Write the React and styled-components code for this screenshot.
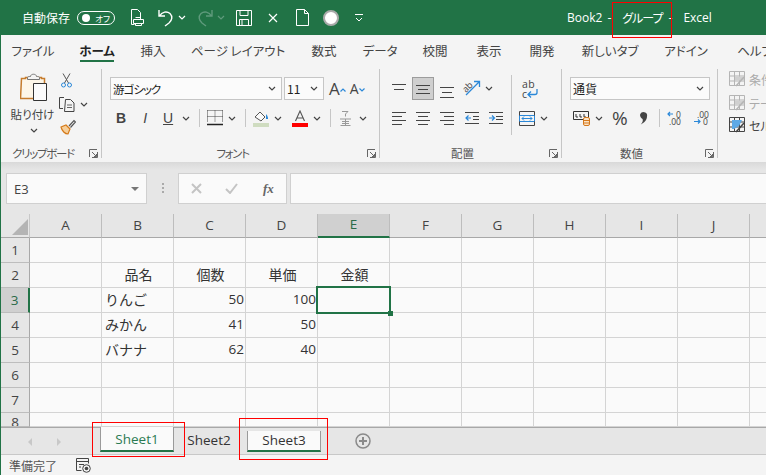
import React from 'react';
import styled, { createGlobalStyle } from 'styled-components';

const GREEN = '#217346';
const BLUE = '#2b88d8';
const JP = '"Noto Sans CJK JP", "Open Sans", sans-serif';

const Global = createGlobalStyle`
  html, body { margin: 0; padding: 0; background: #f3f3f3; }
  body { font-family: ${JP}; font-feature-settings: "palt"; overflow: hidden; }
  #root { width: 766px; height: 475px; overflow: hidden; }
`;

const Page = styled.div`
  position: relative; width: 766px; height: 475px; overflow: hidden;
  display: flex; flex-direction: column; background: #f4f4f4; color: #333;
`;
const Body = styled.div`
  flex: 1; min-height: 0; display: flex; flex-direction: column;
  border-left: 1px solid ${GREEN};
`;

/* title bar */
const TitleBar = styled.header`
  height: 35px; flex: none; background: ${GREEN}; color: #fff;
  display: flex; align-items: center; padding-left: 22px; font-size: 12px;
`;
const Slot = styled.span`
  display: inline-flex; align-items: center; justify-content: center; flex: none;
  margin-left: ${p => p.$ml || 0}px;
  margin-top: ${p => p.$mt || 0}px;
`;
const Toggle = styled.span`
  margin-left: 7px; width: 38px; height: 14px; border: 1px solid #fff; border-radius: 8px; box-sizing: border-box;
  display: flex; align-items: center; justify-content: space-between; padding: 0 4px 0 4px;
  font-size: 8.5px; line-height: 12px; flex: none;
  &::before { content: ''; width: 8px; height: 8px; border-radius: 50%; background: #fff; }
`;
const TitleText = styled.span`
  margin-left: ${p => p.$ml}px; font-size: 12px; line-height: 18px; white-space: nowrap; color: #fff;
  font-family: ${p => (p.$latin ? '"Open Sans", sans-serif' : JP)};
  letter-spacing: ${p => p.$track || 0}px;
`;

/* ribbon tabs */
const TabRow = styled.nav`
  height: 30px; flex: none; display: flex; align-items: stretch; overflow: hidden; margin-left: -1px;
`;
const RibbonTab = styled.span`
  flex: none; width: ${p => p.$w}px; position: relative; text-align: center;
  font-size: 12.5px; line-height: 31px; color: ${p => (p.$active ? '#222' : '#444')};
  font-weight: ${p => (p.$active ? 700 : 400)};
  &::after {
    content: ''; display: ${p => (p.$active ? 'block' : 'none')};
    position: absolute; left: 14px; right: 14px; bottom: 3px; height: 2px; background: ${GREEN};
  }
`;

/* ribbon */
const Ribbon = styled.section`
  height: 97px; flex: none; display: flex; overflow: hidden;
`;
const Group = styled.div`
  flex: none; width: ${p => p.$w}px; height: 89px; margin-top: 4px;
  border-right: ${p => (p.$open ? 'none' : '1px solid #c6c6c6')};
  display: flex; flex-direction: column; box-sizing: border-box;
  padding-left: ${p => p.$pl || 0}px;
`;
const GroupBody = styled.div`
  flex: 1; min-height: 0; display: flex; align-items: flex-start;
`;
const GroupFoot = styled.div`
  height: 10px; flex: none; display: flex; align-items: center; margin-left: -${p => p.$pl || 0}px; padding-right: 3px;
`;
const GroupLabel = styled.span`
  flex: 1; text-align: center; font-size: 11.5px; line-height: 10px; color: #555; padding-right: 4px; white-space: nowrap;
  letter-spacing: ${p => (p.$tight ? '-1.3px' : '0')};
`;
const Stack = styled.div`
  display: flex; flex-direction: column; padding-top: ${p => p.$pt ?? 8}px; flex: none;
  width: ${p => (p.$w ? `${p.$w}px` : 'auto')};
`;
const ToolRow = styled.div`
  display: flex; align-items: center; flex: none;
  height: ${p => p.$h}px; margin-top: ${p => p.$mt || 0}px;
`;
const PasteCol = styled.div`
  width: 44px; margin-left: 11px; flex: none; display: flex; flex-direction: column; align-items: center; padding-top: 3px;
`;
const PasteLabel = styled.span`
  font-size: 11.5px; line-height: 14px; margin: 5px 0 0 -3px; color: #444; white-space: nowrap;
`;
const SmallCol = styled.div`
  flex: none; margin-left: 3px; display: flex; flex-direction: column; padding-top: 3px;
`;
const Combo = styled.div`
  flex: none; box-sizing: border-box; width: ${p => p.$w}px; height: 23px; margin-left: ${p => p.$ml || 0}px;
  background: #fbfbfb; border: 1px solid #c6c6c6; display: flex; align-items: center;
  justify-content: space-between; padding: 0 5px 0 2px; font-size: 12px; color: #222;
`;
const ComboText = styled.span`
  font-size: ${p => p.$s || 12}px; letter-spacing: ${p => p.$track || 0}px;
`;
const Pressed = styled.span`
  flex: none; box-sizing: border-box; width: 22px; height: 23px; margin-left: ${p => p.$ml || 0}px;
  background: #cfcfcf; border: 1px solid #9c9c9c; display: inline-flex; align-items: center; justify-content: center;
`;
const Divider = styled.span`
  flex: none; width: 1px; height: ${p => p.$h || 18}px; background: #c6c6c6; margin-left: ${p => p.$ml || 0}px;
  margin-top: ${p => p.$mt || 0}px;
`;
const GreyLabel = styled.span`
  font-size: 12px; color: ${p => (p.$dark ? '#444' : '#aaa')}; margin-left: 3px; white-space: nowrap;
`;
const StyleRow = styled.div`
  display: flex; align-items: center; height: ${p => p.$h}px; flex: none;
`;
const TextTool = styled.span`
  flex: none; margin-left: ${p => p.$ml || 0}px; color: ${p => p.$c || '#444'}; text-align: center;
  font-family: ${p => p.$font || '"Liberation Sans", sans-serif'};
  font-size: ${p => p.$s}px; font-weight: ${p => p.$b ? 700 : 400}; font-style: ${p => p.$i ? 'italic' : 'normal'};
  text-decoration: ${p => p.$u ? 'underline' : 'none'}; line-height: 20px;
`;
const GrowWrap = styled.span`
  display: inline-flex; color: #444; font-family: "Open Sans", sans-serif; line-height: 20px;
  font-size: ${p => p.$s}px;
`;

/* formula bar */
const FormulaBar = styled.div`
  height: 52px; flex: none; background: linear-gradient(#d9d9d9, #e6e6e6 8px);
  display: flex; align-items: flex-start; padding: 11px 0 0 5px; box-sizing: border-box;
`;
const NameBox = styled.div`
  width: 141px; height: 31px; box-sizing: border-box; background: #fafafa; border: 1px solid #d0d0d0; flex: none;
  display: flex; align-items: center; justify-content: space-between; padding: 0 7px 0 7px;
  font-family: "Open Sans", sans-serif; font-size: 13px; color: #444;
  &::after { content: ''; border-left: 4px solid transparent; border-right: 4px solid transparent; border-top: 4px solid #777; }
`;
const Grip = styled.span`
  width: 2px; height: 10px; margin: 10px 14px 0 15px; flex: none;
  background: repeating-linear-gradient(#aaa 0 2px, transparent 2px 4px);
`;
const FxBox = styled.div`
  width: 109px; height: 31px; box-sizing: border-box; background: #fafafa; border: 1px solid #d0d0d0; flex: none;
  display: flex; align-items: center; padding-left: 12px;
`;
const FxText = styled.i`
  font-family: "Liberation Serif", serif; font-weight: 700; font-size: 13px; color: #666; margin-left: 25px;
`;
const FormulaInput = styled.div`
  flex: 1; height: 31px; box-sizing: border-box; background: #fafafa; border: 1px solid #d0d0d0; margin-left: 3px; border-right: none;
`;

/* sheet */
const Sheet = styled.div`
  height: 213px; flex: none; overflow: hidden; background: #fafafa;
  display: grid; grid-template-columns: 29px repeat(11, 72px); grid-template-rows: 24px repeat(7, 25px) 14px;
  font-size: 13px; color: #333;
`;
const Corner = styled.div`
  background: #e6e6e6; border-bottom: 1px solid #a8a8a8; border-right: 1px solid #c8c8c8; box-sizing: border-box; position: relative;
  &::after { content: ''; position: absolute; right: 1px; bottom: 2px; border-style: solid; border-width: 0 0 16px 16px; border-color: transparent transparent #b4b4b4 transparent; }
`;
const ColHead = styled.div`
  box-sizing: border-box; background: ${p => (p.$on ? '#d0d0d0' : '#e6e6e6')};
  border-bottom: ${p => (p.$on ? `2px solid ${GREEN}` : '1px solid #a8a8a8')};
  border-right: 1px solid #bdbdbd; display: flex; align-items: center; justify-content: center;
  font-family: "Open Sans", sans-serif; font-size: 13.5px; color: ${p => (p.$on ? '#2a6a48' : '#444')};
  padding-bottom: 2px;
`;
const RowHead = styled.div`
  box-sizing: border-box; background: ${p => (p.$on ? '#d0d0d0' : '#e6e6e6')};
  border-bottom: 1px solid #bdbdbd;
  border-right: ${p => (p.$on ? `2px solid ${GREEN}` : '1px solid #a8a8a8')};
  display: flex; align-items: ${p => (p.$cut ? 'flex-start' : 'center')}; justify-content: center; overflow: hidden;
  font-family: "Open Sans", sans-serif; font-size: 13.5px; color: ${p => (p.$on ? '#2a6a48' : '#444')};
`;
const Cell = styled.div`
  box-sizing: border-box; border-right: 1px solid #d4d4d4; border-bottom: 1px solid #d4d4d4; position: relative;
  display: flex; align-items: center; padding: 0 1px 2px 3px; white-space: nowrap; min-width: 0;
  justify-content: ${p => p.$align || 'flex-start'};
  color: #333; font-feature-settings: normal;
  font-size: ${p => (p.$num ? 13.5 : 14)}px; font-family: ${p => p.$num ? '"Open Sans", sans-serif' : JP};
  ${p => p.$selected ? `
    &::before { content: ''; position: absolute; left: -2px; top: -2px; right: -2px; bottom: -2px; border: 2px solid ${GREEN}; z-index: 2; }
    &::after { content: ''; position: absolute; right: -4px; bottom: -4px; width: 5px; height: 5px; background: ${GREEN}; z-index: 3; }
  ` : ''}
`;

/* sheet tabs */
const SheetBar = styled.div`
  height: 28px; flex: none; box-sizing: border-box; background: #e6e6e6;
  border-top: 1px solid #a8a8a8; border-bottom: 1px solid #c8c8c8;
  display: flex; align-items: flex-start; position: relative;
`;
const NavArrow = styled.span`
  flex: none; margin: 10px 0 0 ${p => p.$ml}px; border-top: 4px solid transparent; border-bottom: 4px solid transparent;
  ${p => p.$left ? 'border-right: 4px solid #c8c8c8;' : 'border-left: 4px solid #c8c8c8;'}
`;
const SheetTab = styled.div`
  flex: none; box-sizing: border-box; width: ${p => p.$w || 74}px; margin-left: ${p => p.$ml}px;
  height: ${p => p.$h}px; margin-top: ${p => p.$mt}px;
  background: ${p => p.$plain ? 'transparent' : '#fafafa'};
  ${p => p.$plain ? '' : `border-left: 1px solid #9a9a9a; border-right: 1px solid #9a9a9a; border-bottom: 2px solid ${GREEN};`}
  font-family: "Open Sans", sans-serif; font-size: 13.5px; text-align: center; line-height: ${p => p.$lh}px;
  color: ${p => p.$c || '#333'};
`;
const PlusBtn = styled.span`
  flex: none; margin: 5px 0 0 34px; display: inline-flex;
`;
const StatusBar = styled.footer`
  flex: 1; display: flex; align-items: center; padding-left: 8px; font-size: 12px; color: #555;
`;

/* annotations drawn over the screenshot */
const RedBox = styled.div`
  position: absolute; box-sizing: border-box; border: 1px solid #f00; pointer-events: none;
  left: ${p => p.$x}px; top: ${p => p.$y}px; width: ${p => p.$w}px; height: ${p => p.$h}px;
`;

/* icons */
const Svg = ({ w, h, children, ...rest }) => (
  <svg width={w} height={h} viewBox={`0 0 ${w} ${h}`} fill="none" style={{ display: 'block' }} {...rest}>{children}</svg>
);
const Chev = ({ c = '#444' }) => (
  <Svg w={8} h={5}><path d="M1 1l3 3 3-3" stroke={c} strokeWidth="1.2" /></Svg>
);
const Launcher = () => (
  <Svg w={9} h={9}><path d="M.5 8V.5H8M8.5 3v5.500H3M3 3l4.500 4.500M7.500 5v2.500H5" stroke="#666" /></Svg>
);
const PrintIcon = () => (
  <Svg w={15} h={19}><path d="M1.500 1.500h6l3 3v6M1.500 1.500v15h3M4.500 11.500h7M5.500 9.500h5v2M3.500 11.500h10v4h-10zM5.500 15.500v2h6v-2" stroke="#fff" /></Svg>
);
const UndoWrap = styled.span`
  display: block; transform: ${p => (p.$flip ? 'scaleX(-1)' : 'none')};
`;
const Undo = ({ c = '#fff', flip }) => (
  <UndoWrap $flip={flip}>
    <Svg w={17} h={19}>
      <path d="M2 2v6h6M2.500 8C5 3.500 10 3 13 5.500c3 3 2 7-1 9.500l-4 3" stroke={c} strokeWidth="1.4" />
    </Svg>
  </UndoWrap>
);
const Save = () => (
  <Svg w={16} h={16}><path d="M.5.500h15v15H.5zM4 .5v5h8v-5M3.500 15.500v-6h9v6M6 10v5" stroke="#fff" /></Svg>
);
const XIcon = ({ c = '#fff', s = 10, sw = 1.2 }) => (
  <Svg w={s} h={s}><path d={`M1 1l${s - 2} ${s - 2}M${s - 1} 1L1 ${s - 1}`} stroke={c} strokeWidth={sw} /></Svg>
);
const DocIcon = () => (
  <Svg w={13} h={17}><path d="M.5.500h8l4 4v12H.5zM8.500.500v4h4" stroke="#fff" /></Svg>
);
const CircleIcon = () => (
  <Svg w={16} h={16}><circle cx="8" cy="8" r="7" fill="#fff" stroke="#aaa" strokeWidth="2" /></Svg>
);
const QatMore = () => (
  <Svg w={8} h={8}><path d="M0 .5h8M1 4l3 3 3-3" stroke="#fff" /></Svg>
);
const Paste = () => (
  <Svg w={28} h={30}>
    <path d="M1.500 5.500h4v-1h16v1h3v20h-24z" fill="#fdf6e8" stroke="#c67c2c" strokeWidth="1.5" transform="translate(0 1)" />
    <path d="M7.500 5.500c0-1 2-1 3-1 0-3 6-3 6 0 1 0 3 0 3 1v2h-12z" fill="#f4f4f4" stroke="#777" />
    <path d="M13.500 11.500h13v17h-13z" fill="#fbfbfb" stroke="#333" />
  </Svg>
);
const Cut = () => (
  <Svg w={11} h={15}>
    <path d="M2 .5l5.500 9.500M9 .5L3.500 10" stroke="#555" />
    <circle cx="2.500" cy="12" r="2" stroke="#2b88d8" /><circle cx="8.500" cy="12" r="2" stroke="#2b88d8" />
  </Svg>
);
const Copy = () => (
  <Svg w={16} h={16}>
    <path d="M5 1.500H.5v11H4M6.500 3.500h5l3.500 3.500v8.500H5.500z" stroke="#444" />
    <path d="M8 9h5M8 11.500h5" stroke="#666" />
  </Svg>
);
const Brush = () => (
  <Svg w={16} h={16}>
    <path d="M1 8l5-2 4 4-2 5c-3 0-6-3-7-7z" fill="#f6cf9a" stroke="#d57a1a" strokeWidth="1.200" />
    <path d="M9 7l5-5.500 1.500 1.500L10.500 8.500" stroke="#555" strokeWidth="1.200" />
  </Svg>
);
const GrowA = ({ up }) => (
  <GrowWrap $s={up ? 17 : 14}>
    A
    <Slot $mt={3}>
      <Svg w={6} h={4}>
        <path d={up ? 'M.5 3.500L3 1l2.500 2.500' : 'M.5 .5L3 3l2.500-2.500'} stroke={BLUE} strokeWidth="1.200" />
      </Svg>
    </Slot>
  </GrowWrap>
);
const Borders = () => (
  <Svg w={16} h={16}>
    <path d="M.5.500h15M.5.500v12M15.500.500v12M.5 6.500h15M8 .5v12" stroke="#444" strokeDasharray="1 1" />
    <path d="M0 14.500h16" stroke="#222" strokeWidth="1.500" />
  </Svg>
);
const Fill = () => (
  <Svg w={16} h={17}>
    <path d="M2 7l5-5 5 5-4 4z" fill="#fafafa" stroke="#555" />
    <path d="M13 4c2 2 2 4 2 5h-2z" fill={BLUE} />
    <rect y="13" width="16" height="4" fill="#cfdcc0" />
  </Svg>
);
const FontColor = () => (
  <Svg w={16} h={17}><path d="M3.500 11L8 1l4.500 10M5 8h6" stroke="#555" strokeWidth="1.100" /><rect y="13" width="16" height="4" fill="#f00" /></Svg>
);
const Ruby = () => (
  <Svg w={13} h={15}>
    <path d="M3 .5h6L6.500 3v2.500M1 8h11M3 10.500h7M1.500 14.500h10M6.500 8v6.500M3 12.500h7" stroke="#999" />
  </Svg>
);
const Lines = ({ items }) => (
  <Svg w={14} h={14}><path d={items.map(([x, y, l]) => `M${x} ${y}.5h${l}`).join('')} stroke="#444" /></Svg>
);
const WrapBox = styled.span`
  display: flex; flex-direction: column; position: relative; width: 16px; height: 20px;
  font: 10.5px/10px "Open Sans", sans-serif; color: #444; letter-spacing: .5px;
`;
const WrapArrow = styled.span`
  position: absolute; right: 0; bottom: 1px;
`;
const WrapText = () => (
  <WrapBox>
    <span>ab</span><span>c</span>
    <WrapArrow>
      <Svg w={11} h={9}>
        <path d="M10 0v3.500c0 1-1 2-2 2H1.500M4 2.500L1 5.500l3 3" stroke={BLUE} strokeWidth="1.300" />
      </Svg>
    </WrapArrow>
  </WrapBox>
);
const Orient = () => (
  <Svg w={18} h={17}>
    <path d="M3 15L16 2M11 1.500h5.500V7" stroke={BLUE} strokeWidth="1.300" />
    <text x="0" y="10" transform="rotate(-45 5 8)" fontSize="9" fill="#444" fontFamily="Open Sans">ab</text>
  </Svg>
);
const Indent = ({ inc }) => (
  <Svg w={14} h={12}>
    <path d={inc ? 'M0 .5h14M7 4.500h7M7 7.500h7M0 11.500h14' : 'M0 .5h14M8 4.500h6M8 7.500h6M0 11.500h14'} stroke="#444" />
    <path d={inc ? 'M0 6h5M3 3.500L5.500 6 3 8.500' : 'M6 6H1M3.500 3.500L1 6l2.500 2.500'} stroke={BLUE} strokeWidth="1.200" />
  </Svg>
);
const Merge = () => (
  <Svg w={16} h={15}>
    <path d="M.5.500h15v14H.5z" stroke="#444" />
    <path d="M1 4.500h14M1 10.500h14" stroke={BLUE} /><path d="M.5 4.500v6M15.500 4.500v6" stroke={BLUE} />
    <path d="M3 7.500h10M5 5.500l-2 2 2 2M11 5.500l2 2-2 2" stroke={BLUE} />
  </Svg>
);
const Accounting = () => (
  <Svg w={17} h={16}>
    <path d="M.5 1.500h15v8H.5zM3 4v3h2M7 4v3h2M11 4v3h2" stroke="#333" />
    <rect x="10.500" y="7.500" width="6" height="8" rx="1.500" fill="#fbe3c6" stroke="#d5791c" />
    <path d="M10.500 10.500h6M10.500 13h6" stroke="#d5791c" />
  </Svg>
);
const Comma = () => (
  <Svg w={9} h={14}><path d="M1 3.800a3.500 3.500 0 1 1 7 1.700C8 9 5 12 1.800 13.500c1.700-2 2.400-3.300 1.800-5.500C2 7.500 1 5.500 1 3.800z" fill="#444" /></Svg>
);
const Decimal = ({ dec }) => (
  <Svg w={16} h={15}>
    <path d={dec ? 'M6 3H1M3 1L1 3l2 2' : 'M1 10.500h6M5 8.500l2 2-2 2'} stroke={BLUE} strokeWidth="1.200" />
    <text x={dec ? 9 : 4} y="6.500" fontSize="8.500" fill="#444" fontFamily="Open Sans">{dec ? '0' : '.00'}</text>
    <text x={dec ? 2 : 10} y="14" fontSize="8.500" fill="#444" fontFamily="Open Sans">{dec ? '.00' : '0'}</text>
  </Svg>
);
const StyleIcon = ({ faded, blue }) => (
  <Svg w={17} h={16}>
    <path d="M.5.500h15v14H.5zM.5 5h15M.5 10h15M5.500.500v14M10.500.500v14" stroke={faded ? '#b5b5b5' : '#444'} />
    {faded && <path d="M6 5.500h9v4H6z" fill="#d0d0d0" />}
    {blue && <path d="M3 3h10l-3 6-5 3H3z" fill="#5ea9e6" />}
    {(blue || faded) && <path d="M7 15L15 6" stroke={blue ? '#444' : '#b5b5b5'} strokeWidth="1.500" />}
  </Svg>
);
const Check = () => (
  <Svg w={13} h={11}><path d="M1 6l4 4 7-9" stroke="#c4c4c4" strokeWidth="2" /></Svg>
);
const Plus = () => (
  <Svg w={16} h={16}><circle cx="8" cy="8" r="7" stroke="#8a8a8a" strokeWidth="1.500" /><path d="M8 4v8M4 8h8" stroke="#8a8a8a" strokeWidth="2" /></Svg>
);
const Macro = () => (
  <Svg w={15} h={15}>
    <path d="M.5.500h12M.5.500v12h5M.5 3.500h12M12.500.500v5" stroke="#444" /><path d="M3 6.500h5M3 9h2" stroke="#444" />
    <circle cx="10.500" cy="10.500" r="3.800" stroke="#444" /><circle cx="10.500" cy="10.500" r="1.800" fill="#444" />
  </Svg>
);

const tabs = [
  ['ファイル', 66], ['ホーム', 62, true], ['挿入', 50], ['ページ レイアウト', 120], ['数式', 52], ['データ', 60],
  ['校閲', 50], ['表示', 58], ['開発', 48], ['新しいタブ', 88], ['アドイン', 64], ['ヘルプ', 74],
];
const cols = ['A', 'B', 'C', 'D', 'E', 'F', 'G', 'H', 'I', 'J', ''];
const rows = {
  2: { B: ['品名', 'center'], C: ['個数', 'center'], D: ['単価', 'center'], E: ['金額', 'center'] },
  3: { B: ['りんご'], C: ['50', 'flex-end', 1], D: ['100', 'flex-end', 1] },
  4: { B: ['みかん'], C: ['41', 'flex-end', 1], D: ['50', 'flex-end', 1] },
  5: { B: ['バナナ'], C: ['62', 'flex-end', 1], D: ['40', 'flex-end', 1] },
};

export default function App() {
  return (
    <Page>
      <Global />
      <TitleBar>
        <span>自動保存</span>
        <Toggle>オフ</Toggle>
        <Slot $ml={15}><PrintIcon /></Slot>
        <Slot $ml={12}><Undo /></Slot>
        <Slot $ml={4}><Chev c="#fff" /></Slot>
        <Slot $ml={11}><Undo c="#5f9a7c" flip /></Slot>
        <Slot $ml={3}><Chev c="#5f9a7c" /></Slot>
        <Slot $ml={11}><Save /></Slot>
        <Slot $ml={16}><XIcon /></Slot>
        <Slot $ml={18}><DocIcon /></Slot>
        <Slot $ml={14}><CircleIcon /></Slot>
        <Slot $ml={16}><QatMore /></Slot>
        <TitleText $ml={204} $latin>Book2</TitleText>
        <TitleText $ml={5} $latin>-</TitleText>
        <TitleText $ml={11} $track={-1}>グループ</TitleText>
        <TitleText $ml={6} $latin>-</TitleText>
        <TitleText $ml={11} $latin>Excel</TitleText>
      </TitleBar>
      <Body>
        <TabRow>
          {tabs.map(([t, w, a]) => <RibbonTab key={t} $w={w} $active={a}>{t}</RibbonTab>)}
        </TabRow>
        <Ribbon>
          <Group $w={101}>
            <GroupBody>
              <PasteCol>
                <Paste />
                <PasteLabel>貼り付け</PasteLabel>
                <Slot $mt={7}><Chev /></Slot>
              </PasteCol>
              <SmallCol>
                <ToolRow $h={17}><Slot $ml={2}><Cut /></Slot></ToolRow>
                <ToolRow $h={16} $mt={7}><Slot><Copy /></Slot><Slot $ml={5}><Chev /></Slot></ToolRow>
                <ToolRow $h={16} $mt={7}><Slot $ml={1}><Brush /></Slot></ToolRow>
              </SmallCol>
            </GroupBody>
            <GroupFoot><GroupLabel $tight>クリップボード</GroupLabel><Launcher /></GroupFoot>
          </Group>

          <Group $w={278} $pl={8}>
            <GroupBody>
              <Stack>
                <ToolRow $h={23}>
                  <Combo $w={172}><ComboText $s={11.5} $track={-1}>游ゴシック</ComboText><Chev /></Combo>
                  <Combo $w={40} $ml={2}>11<Chev /></Combo>
                  <Slot $ml={5}><GrowA up /></Slot>
                  <Slot $ml={4}><GrowA /></Slot>
                </ToolRow>
                <ToolRow $h={20} $mt={8}>
                  <TextTool $s={14} $b $ml={6}>B</TextTool>
                  <TextTool $s={14} $i $ml={17}>I</TextTool>
                  <TextTool $s={14} $u $ml={16}>U</TextTool>
                  <Slot $ml={9}><Chev /></Slot>
                  <Divider $ml={9} />
                  <Slot $ml={7}><Borders /></Slot>
                  <Slot $ml={5}><Chev /></Slot>
                  <Divider $ml={9} />
                  <Slot $ml={7}><Fill /></Slot>
                  <Slot $ml={5}><Chev /></Slot>
                  <Slot $ml={10}><FontColor /></Slot>
                  <Slot $ml={5}><Chev /></Slot>
                  <Divider $ml={9} />
                  <Slot $ml={8}><Ruby /></Slot>
                  <Slot $ml={7}><Chev /></Slot>
                </ToolRow>
              </Stack>
            </GroupBody>
            <GroupFoot $pl={8}><GroupLabel $tight>フォント</GroupLabel><Launcher /></GroupFoot>
          </Group>

          <Group $w={182} $pl={12}>
            <GroupBody>
              <Stack $w={119}>
                <ToolRow $h={23}>
                  <Lines items={[[0, 2, 14], [2, 7, 10]]} />
                  <Pressed $ml={6}><Lines items={[[0, 3, 14], [2, 7, 10], [0, 11, 14]]} /></Pressed>
                  <Slot $ml={6} $mt={7}><Lines items={[[0, 2, 14], [2, 7, 10], [0, 12, 14]]} /></Slot>
                  <Slot $ml={9}><Orient /></Slot>
                  <Slot $ml={4}><Chev /></Slot>
                </ToolRow>
                <ToolRow $h={20} $mt={8}>
                  <Lines items={[[0, 1, 14], [0, 5, 10], [0, 9, 14], [0, 13, 10]]} />
                  <Slot $ml={10}><Lines items={[[0, 1, 14], [2, 5, 10], [0, 9, 14], [2, 13, 10]]} /></Slot>
                  <Slot $ml={10}><Lines items={[[0, 1, 14], [4, 5, 10], [0, 9, 14], [4, 13, 10]]} /></Slot>
                  <Slot $ml={11}><Indent /></Slot>
                  <Slot $ml={10}><Indent inc /></Slot>
                </ToolRow>
              </Stack>
              <Divider $h={60} $mt={6} />
              <Stack>
                <ToolRow $h={23}><Slot $ml={10}><WrapText /></Slot></ToolRow>
                <ToolRow $h={20} $mt={8}>
                  <Slot $ml={7}><Merge /></Slot>
                  <Slot $ml={5}><Chev /></Slot>
                </ToolRow>
              </Stack>
            </GroupBody>
            <GroupFoot $pl={12}><GroupLabel>配置</GroupLabel><Launcher /></GroupFoot>
          </Group>

          <Group $w={156} $pl={8}>
            <GroupBody>
              <Stack>
                <ToolRow $h={23}>
                  <Combo $w={140}>通貨<Chev /></Combo>
                </ToolRow>
                <ToolRow $h={20} $mt={8}>
                  <Slot $ml={3}><Accounting /></Slot>
                  <Slot $ml={5}><Chev /></Slot>
                  <TextTool $s={19} $ml={9} $font='"Open Sans", sans-serif'>%</TextTool>
                  <Slot $ml={11}><Comma /></Slot>
                  <Divider $ml={11} />
                  <Slot $ml={7}><Decimal dec /></Slot>
                  <Slot $ml={10}><Decimal /></Slot>
                </ToolRow>
              </Stack>
            </GroupBody>
            <GroupFoot $pl={8}><GroupLabel>数値</GroupLabel><Launcher /></GroupFoot>
          </Group>

          <Group $w={50} $open $pl={11}>
            <Stack $pt={0}>
              <StyleRow $h={20}><Slot><StyleIcon faded /></Slot><GreyLabel>条件付き書式</GreyLabel></StyleRow>
              <StyleRow $h={28}><Slot><StyleIcon faded /></Slot><GreyLabel>テーブルとして</GreyLabel></StyleRow>
              <StyleRow $h={16}><Slot><StyleIcon blue /></Slot><GreyLabel $dark>セルのスタイル</GreyLabel></StyleRow>
            </Stack>
          </Group>
        </Ribbon>

        <FormulaBar>
          <NameBox>E3</NameBox>
          <Grip />
          <FxBox>
            <XIcon c="#c4c4c4" s={11} sw={2} />
            <Slot $ml={23}><Check /></Slot>
            <FxText>fx</FxText>
          </FxBox>
          <FormulaInput />
        </FormulaBar>

        <Sheet>
          <Corner />
          {cols.map((c, i) => <ColHead key={i} $on={c === 'E'}>{c}</ColHead>)}
          {[1, 2, 3, 4, 5, 6, 7, 8].map(r => (
            <React.Fragment key={r}>
              <RowHead $on={r === 3} $cut={r === 8}>{r}</RowHead>
              {cols.map((c, i) => {
                const v = rows[r] && rows[r][c];
                return (
                  <Cell key={i} $align={v && v[1]} $num={v && v[2]} $selected={r === 3 && c === 'E'}>
                    {v && v[0]}
                  </Cell>
                );
              })}
            </React.Fragment>
          ))}
        </Sheet>

        <SheetBar>
          <NavArrow $left $ml={27} />
          <NavArrow $ml={25} />
          <SheetTab $ml={39} $h={25} $mt={-1} $lh={25} $c="#2a7a52">Sheet1</SheetTab>
          <SheetTab $plain $w={58} $ml={6} $h={24} $mt={0} $lh={24}>Sheet2</SheetTab>
          <SheetTab $ml={9} $h={21} $mt={3} $lh={19} $w={74}>Sheet3</SheetTab>
          <PlusBtn><Plus /></PlusBtn>
        </SheetBar>
        <StatusBar>
          <span>準備完了</span>
          <Slot $ml={19}><Macro /></Slot>
        </StatusBar>
      </Body>
      <RedBox $x={612} $y={2} $w={60} $h={36} />
      <RedBox $x={92} $y={422} $w={93} $h={35} />
      <RedBox $x={239} $y={418} $w={89} $h={42} />
    </Page>
  );
}
